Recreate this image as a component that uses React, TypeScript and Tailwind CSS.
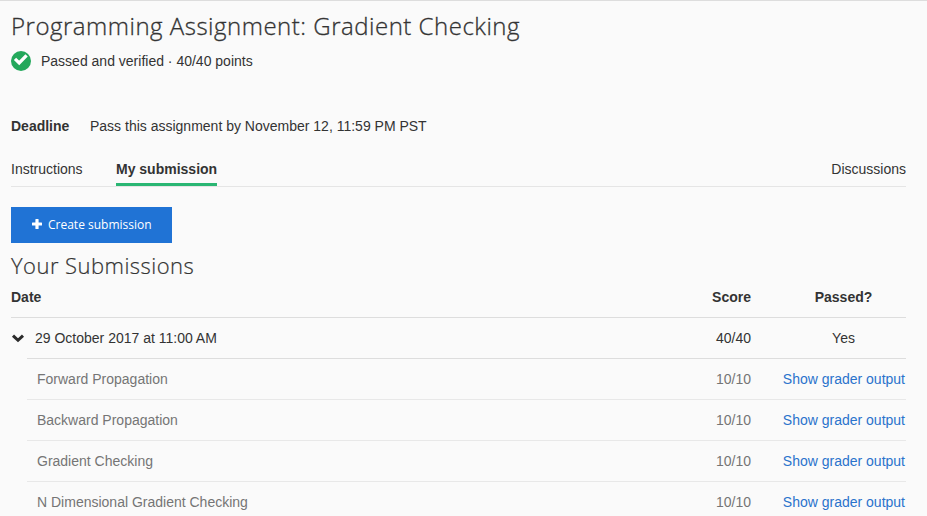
const parts = [
  'Forward Propagation',
  'Backward Propagation',
  'Gradient Checking',
  'N Dimensional Gradient Checking',
];

function PassedIcon() {
  return (
    <svg className="h-5 w-5 shrink-0" viewBox="0 0 20 20" aria-hidden="true">
      <circle cx="10" cy="10" r="10" fill="#23a85b" />
      <path d="M4 7.9L8.2 11.9L15.6 4.4" fill="none" stroke="#fff" strokeWidth="3.3" />
    </svg>
  );
}

function PlusIcon() {
  return (
    <svg className="relative -top-px h-[10px] w-[10px] shrink-0" viewBox="0 0 10 10" aria-hidden="true">
      <path
        d="M3.9 0h2.2q.5 0 .5.5v2.9h2.9q.5 0 .5.5v2.2q0 .5-.5.5H6.6v2.9q0 .5-.5.5H3.9q-.5 0-.5-.5V6.6H.5q-.5 0-.5-.5V3.9q0-.5.5-.5h2.9V.5q0-.5.5-.5z"
        fill="#fff"
      />
    </svg>
  );
}

function ChevronIcon() {
  return (
    <svg className="h-[10px] w-[14px] shrink-0" viewBox="0 0 14 10" aria-hidden="true">
      <path d="M2 1.6L7 6.3L12 1.6" fill="none" stroke="#2b2b2b" strokeWidth="3" />
    </svg>
  );
}

export default function App() {
  return (
    <main className="h-[516px] overflow-hidden border-t border-[#ddd] bg-[#fafafa] pr-[21px] pl-[11px] font-['Liberation_Sans',Arial,sans-serif] text-[14px] leading-5 text-[#333]">
      <h1 className="pt-[9px] font-['Open_Sans',sans-serif] text-[24px] leading-8 font-light tracking-[0.51px] whitespace-nowrap [-webkit-text-stroke:0.3px_#333]">
        Programming Assignment: Gradient Checking
      </h1>
      <div className="mt-[9px] flex h-5 items-center gap-[10px]">
        <PassedIcon />
        <span>Passed and verified · 40/40 points</span>
      </div>
      <div className="mt-[45px] flex h-5">
        <strong className="w-[79px]">Deadline</strong>
        <span>Pass this assignment by November 12, 11:59 PM PST</span>
      </div>
      <nav className="mt-[23px] flex h-[28px] border-b border-[#e5e5e5]">
        <a className="w-[105px]">Instructions</a>
        <a className="h-[27px] border-b-3 border-[#2ab673] font-bold">My submission</a>
        <a className="ml-auto">Discussions</a>
      </nav>
      <button className="mt-5 flex h-9 w-[161px] items-center bg-[#2073d5] pl-[21px] font-['Open_Sans',sans-serif] text-[12px] text-white">
        <PlusIcon />
        <span className="ml-[6px] whitespace-nowrap">Create submission</span>
      </button>
      <h2 className="mt-[6px] mb-px font-['Open_Sans',sans-serif] text-[22px] leading-8 font-light tracking-[0.46px] [-webkit-text-stroke:0.2px_#333]">
        Your Submissions
      </h2>
      <section>
        <div className="flex h-[36px] border-b border-[#ddd] pt-[5px] font-bold">
          <span className="flex-1">Date</span>
          <span className="w-[60px] text-right">Score</span>
          <span className="ml-[29px] w-[126px] pl-px text-center">Passed?</span>
        </div>
        <div className="flex h-[41px] items-center">
          <div className="w-[16px]">
            <ChevronIcon />
          </div>
          <div className="flex h-full flex-1 items-center border-b border-[#ddd] pl-[8px]">
            <span className="flex-1">29 October 2017 at 11:00 AM</span>
            <span className="w-[60px] text-right">40/40</span>
            <span className="ml-[29px] w-[126px] pl-px text-center">Yes</span>
          </div>
        </div>
        <div className="pl-[16px]">
          {parts.map((name) => (
            <div key={name} className="flex h-[41px] items-center border-b border-[#e8e8e8] pl-[10px] text-[#757575]">
              <span className="flex-1">{name}</span>
              <span className="w-[60px] text-right">10/10</span>
              <a className="ml-[29px] w-[126px] pr-px text-right text-[#2a73cc]">Show grader output</a>
            </div>
          ))}
        </div>
      </section>
    </main>
  );
}
